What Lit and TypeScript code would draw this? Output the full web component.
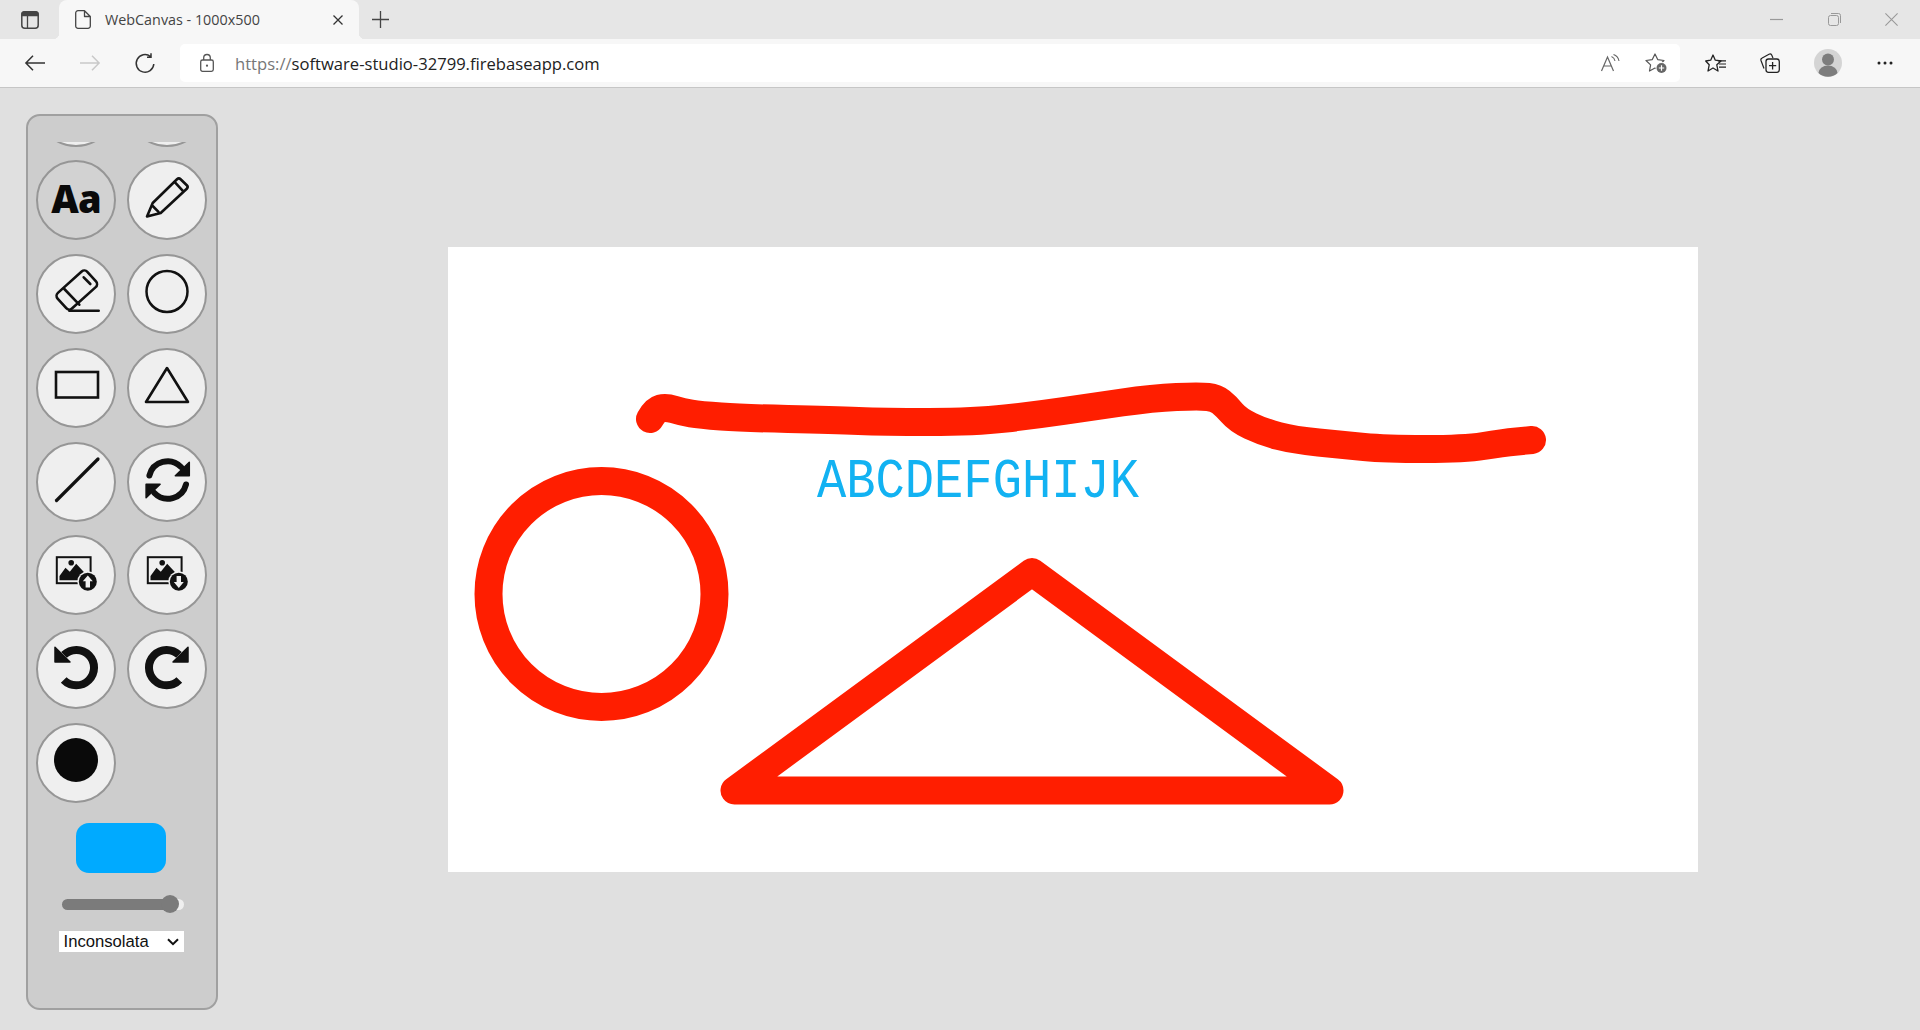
import { LitElement, css, html, svg } from "lit";
import { customElement } from "lit/decorators.js";

// Sidebar icons, all on a 48 box centred in their button.
const pencil = svg`<path d="M4 40.5 9.7 27 34 3.2a2.6 2.6 0 0 1 3.6 0l6.2 6a2.6 2.6 0 0 1 0 3.6L17.7 37ZM32 6.3l8.3 9M8.7 29l7.3 7.3" fill="none" stroke="#111" stroke-width="2.6" stroke-linejoin="round"/>`;
const eraser = svg`<g fill="none" stroke="#111" stroke-width="2.6" stroke-linecap="round"><rect x="-20" y="-10.5" width="40" height="21" rx="4" transform="translate(24.8 20) rotate(-42)"/><path d="M12.3 19 27.3 34.7M31.7 7.3 38.3 14M17.3 40.7H46.7"/></g>`;
const ring = svg`<circle cx="24" cy="21.500" r="20.500" fill="none" stroke="#111" stroke-width="2.500"/>`;
const rectangle = svg`<rect x="4" y="8" width="42" height="25.500" fill="none" stroke="#111" stroke-width="2.600"/>`;
const triangle = svg`<path d="M24 4 45 38H3Z" fill="none" stroke="#111" stroke-width="2.600" stroke-linejoin="round"/>`;
const line = svg`<path d="M4.500 42.500 46 1" stroke="#111" stroke-width="3.200" stroke-linecap="round"/>`;

const syncHalf = svg`<path d="M6.400 17.500A18.700 18.700 0 0 1 38 9" fill="none" stroke="#111" stroke-width="6" stroke-linecap="round"/><path d="M46.300 4.300V17.700H32.300Z" fill="#111" stroke="#111" stroke-width="1.500" stroke-linejoin="round"/>`;
const sync = svg`${syncHalf}<g transform="rotate(180 24.700 22)">${syncHalf}</g>`;

const undo = svg`<path d="M12 9.900A17.700 17.700 0 1 1 11.700 35" fill="none" stroke="#111" stroke-width="8"/><path d="M3 2.300V17H18Z" fill="#111" stroke="#111" stroke-width="1.500" stroke-linejoin="round"/>`;
const redo = svg`<g transform="translate(48 0) scale(-1 1)">${undo}</g>`;

const frame = svg`<rect x="4.800" y="6.200" width="33.800" height="26" fill="none" stroke="#111" stroke-width="2"/><circle cx="19.200" cy="11.700" r="2.800" fill="#111"/><path d="M7.500 29.300V25l6-8.300 4.300 4 6.400-8L33.500 22.700V29.300Z" fill="#111"/>`;
const badge = svg`<circle cx="35.800" cy="30.700" r="10.500" fill="#efefef"/><circle cx="35.800" cy="30.700" r="9" fill="#111"/>`;
const imageUp = svg`${frame}${badge}<path d="M35.800 24.500 40.800 30.300H38V36.500H33.600V30.300H30.800Z" fill="#efefef"/>`;
const imageDown = svg`${frame}${badge}<path d="M35.800 36.900 40.800 31.100H38V24.900H33.600V31.100H30.800Z" fill="#efefef"/>`;

const glyph = (d: unknown) => html`<svg class="glyph" viewBox="0 0 48 48">${d}</svg>`;

// Freehand stroke on the sheet, in the sheet's own pixels.
const scribble = [
  [202, 172], [207, 163], [218, 160], [234, 165], [252, 168], [294, 171], [386, 173],
  [435, 175], [527, 175], [588, 168], [643, 160], [705, 151], [752, 149], [768, 151],
  [778, 159], [790, 173], [815, 185], [846, 193], [895, 198], [937, 202], [1017, 202],
  [1054, 196], [1084, 193],
];

// Smooths the points with quadratic segments through their midpoints.
const smoothPath = (points: number[][]) => {
  let d = `M${points[0][0]} ${points[0][1]}`;
  for (let i = 1; i < points.length - 1; i++) {
    const [x, y] = points[i];
    const [nx, ny] = points[i + 1];
    d += `Q${x} ${y} ${(x + nx) / 2} ${(y + ny) / 2}`;
  }
  const last = points[points.length - 1];
  return `${d}L${last[0]} ${last[1]}`;
};

@customElement("app-root")
export class AppRoot extends LitElement {
  static styles = css`
    :host {
      display: flex;
      flex-direction: column;
      height: 1030px;
      background: #e0e0e0;
      font-family: "Open Sans", "Liberation Sans", sans-serif;
      overflow: hidden;
    }
    svg {
      display: block;
      overflow: visible;
    }
    .tabs {
      display: flex;
      align-items: center;
      height: 39px;
      flex: none;
      padding-left: 21px;
      background: #e6e6e6;
    }
    .tab {
      position: relative;
      display: flex;
      align-items: center;
      align-self: stretch;
      width: 300px;
      margin-left: 20px;
      padding: 0 16px;
      box-sizing: border-box;
      background: #f7f7f7;
      border-radius: 8px 8px 0 0;
    }
    .tab::before,
    .tab::after {
      content: "";
      position: absolute;
      bottom: 0;
      width: 6px;
      height: 6px;
    }
    .tab::before {
      left: -6px;
      background: radial-gradient(circle at 0 0, transparent 6px, #f7f7f7 6.5px);
    }
    .tab::after {
      right: -6px;
      background: radial-gradient(circle at 100% 0, transparent 6px, #f7f7f7 6.5px);
    }
    .title {
      margin-left: 14px;
      font-size: 14.35px;
      color: #444;
      white-space: nowrap;
    }
    .tab-close {
      margin-left: auto;
    }
    .new-tab {
      margin-left: 13px;
    }
    .window {
      display: flex;
      gap: 44.500px;
      margin-left: auto;
      padding-right: 22px;
    }
    .toolbar {
      display: flex;
      align-items: center;
      height: 49px;
      flex: none;
      padding-left: 7px;
      box-sizing: border-box;
      background: #f7f7f7;
      border-bottom: 1px solid #c6c6c6;
    }
    .slot {
      display: flex;
      justify-content: center;
      align-items: center;
      width: 55px;
      flex: none;
    }
    .slot.fav,
    .slot.more {
      width: 54px;
    }
    .slot.collect {
      width: 56px;
    }
    .slot.profile {
      width: 60px;
    }
    .address {
      display: flex;
      align-items: center;
      width: 1500px;
      height: 38px;
      flex: none;
      margin-left: 8px;
      margin-right: 8px;
      padding: 0 13px 0 20px;
      box-sizing: border-box;
      background: #fff;
      border-radius: 5px;
    }
    .url {
      margin-left: 21px;
      font-size: 16.600px;
      color: #222;
      white-space: nowrap;
    }
    .url span {
      color: #777;
    }
    .address-actions {
      display: flex;
      align-items: center;
      gap: 25px;
      margin-left: auto;
    }
    .page {
      display: flex;
      align-items: flex-start;
      flex: 1;
    }
    .panel {
      display: flex;
      flex-direction: column;
      align-items: center;
      width: 192px;
      height: 896px;
      flex: none;
      margin: 26px 0 0 25.500px;
      padding-top: 26px;
      box-sizing: border-box;
      background: #cdcdcd;
      border: 2px solid #a0a0a0;
      border-radius: 14px;
    }
    .scroller {
      align-self: flex-start;
      width: 180px;
      height: 663px;
      overflow: hidden;
    }
    .tools {
      display: grid;
      grid-template-columns: 80px 80px;
      gap: 13.750px 11.250px;
      margin: -75.300px 0 0 8.500px;
    }
    .tool {
      display: flex;
      align-items: center;
      justify-content: center;
      width: 80px;
      height: 80px;
      padding: 0;
      box-sizing: border-box;
      background: #efefef;
      border: 2px solid #969696;
      border-radius: 50%;
    }
    .tool.active {
      background: #d2d2d2;
    }
    .glyph {
      width: 48px;
      height: 48px;
    }
    .aa {
      margin-bottom: 5px;
      font-family: "Open Sans", "Liberation Sans", sans-serif;
      font-weight: 800;
      font-size: 38px;
      letter-spacing: -1px;
      line-height: 1;
      color: #0a0a0a;
    }
    .dot {
      width: 44px;
      height: 44px;
      margin-bottom: 5px;
      border-radius: 50%;
      background: #0a0a0a;
    }
    .swatch {
      width: 90px;
      height: 50px;
      flex: none;
      margin: 18px 1px 0 0;
      background: #00aaff;
      border-radius: 13px;
    }
    .size {
      appearance: none;
      -webkit-appearance: none;
      display: block;
      width: 122px;
      height: 18px;
      flex: none;
      margin: 22px 0 0 3px;
      background: transparent;
    }
    .size::-webkit-slider-runnable-track {
      height: 11px;
      border-radius: 5.500px;
      background: linear-gradient(to right, #7b7b7b 88%, #efefef 88%);
    }
    .size::-webkit-slider-thumb {
      -webkit-appearance: none;
      width: 18px;
      height: 18px;
      margin-top: -3.500px;
      border-radius: 50%;
      background: #7b7b7b;
    }
    .font {
      appearance: none;
      -webkit-appearance: none;
      width: 125px;
      height: 21px;
      flex: none;
      margin: 18px 0 0 -1px;
      padding: 0 0 0 5px;
      background: #fff
        url("data:image/svg+xml,%3Csvg xmlns='http://www.w3.org/2000/svg' width='12' height='8'%3E%3Cpath d='M1 1.200 6 6.200 11 1.200' fill='none' stroke='%23111' stroke-width='2'/%3E%3C/svg%3E")
        no-repeat right 5px center;
      border: none;
      border-radius: 0;
      font-family: "Liberation Sans", Arial, sans-serif;
      font-size: 16.670px;
      color: #111;
    }
    .sheet {
      width: 1250px;
      height: 625px;
      flex: none;
      margin: 159px 0 0 230.500px;
      background: #fff;
    }
    .sheet text {
      font-family: "Liberation Mono", monospace;
      font-size: 55px;
      fill: #12b2f2;
    }
  `;

  private tool(content: unknown, active = false) {
    return html`<button class="tool ${active ? "active" : ""}">${content}</button>`;
  }

  private renderTabs() {
    return html`
      <div class="tabs">
        <svg width="18" height="18" viewBox="0 0 18 18">
          <rect x=".8" y=".8" width="16.4" height="16.4" rx="3" fill="none" stroke="#444" stroke-width="1.5"></rect>
          <path d="M1 4.5V3a2 2 0 0 1 2-2h12a2 2 0 0 1 2 2v1.5ZM6.5 4.5V17" fill="#444" stroke="#444" stroke-width="1.3"></path>
        </svg>
        <div class="tab">
          <svg width="16" height="19" viewBox="0 0 16 19">
            <path d="M3 .7H9.5L15.3 6.5V16a2.3 2.3 0 0 1-2.3 2.3H3A2.3 2.3 0 0 1 .7 16V3A2.3 2.3 0 0 1 3 .7ZM9.5 .7V6.5H15.3" fill="none" stroke="#444" stroke-width="1.3" stroke-linejoin="round"></path>
          </svg>
          <span class="title">WebCanvas - 1000x500</span>
          <svg class="tab-close" width="10" height="10" viewBox="0 0 10 10">
            <path d="M.5 .5 9.5 9.5M9.5 .5 .5 9.5" stroke="#333" stroke-width="1.3"></path>
          </svg>
        </div>
        <svg class="new-tab" width="17" height="17" viewBox="0 0 17 17">
          <path d="M8.5 0V17M0 8.5H17" stroke="#444" stroke-width="1.3"></path>
        </svg>
        <div class="window">
          <svg width="13" height="13" viewBox="0 0 13 13"><path d="M0 6.5H13" stroke="#999" stroke-width="1.2"></path></svg>
          <svg width="13" height="13" viewBox="0 0 13 13">
            <rect x=".5" y="2.5" width="10" height="10" rx="2" fill="none" stroke="#999"></rect>
            <path d="M3 .5H10.5A2 2 0 0 1 12.5 2.5V10" fill="none" stroke="#999"></path>
          </svg>
          <svg width="13" height="13" viewBox="0 0 13 13"><path d="M.4 .4 12.6 12.6M12.6 .4 .4 12.6" stroke="#999" stroke-width="1.1"></path></svg>
        </div>
      </div>
    `;
  }

  private renderToolbar() {
    return html`
      <div class="toolbar">
        <div class="slot">
          <svg width="20" height="16" viewBox="0 0 20 16"><path d="M20 8H1M8 .7 .9 8 8 15.3" fill="none" stroke="#333" stroke-width="1.5"></path></svg>
        </div>
        <div class="slot">
          <svg width="20" height="16" viewBox="0 0 20 16"><path d="M0 8H19M12 .7 19.1 8 12 15.3" fill="none" stroke="#c9c9c9" stroke-width="1.5"></path></svg>
        </div>
        <div class="slot">
          <svg width="20" height="20" viewBox="0 0 20 20">
            <path d="M15.5 3.5A8.8 8.8 0 1 0 18.8 11M16 .2V4.2H12" fill="none" stroke="#333" stroke-width="1.5"></path>
          </svg>
        </div>
        <div class="address">
          <svg width="14" height="18" viewBox="0 0 14 18">
            <rect x=".7" y="6" width="12.6" height="11.3" rx="1.8" fill="none" stroke="#555" stroke-width="1.3"></rect>
            <path d="M3.7 6V3.8a3.3 3.3 0 0 1 6.6 0V6" fill="none" stroke="#555" stroke-width="1.3"></path>
            <circle cx="7" cy="11.7" r="1.1" fill="#555"></circle>
          </svg>
          <div class="url"><span>https://</span>software-studio-32799.firebaseapp.com</div>
          <div class="address-actions">
            <svg width="19" height="18" viewBox="0 0 19 18">
              <path d="M.5 17 6.5 3 12.5 17M2.5 12H10.5" fill="none" stroke="#666" stroke-width="1.2"></path>
              <path d="M10.5 2.5A6 6 0 0 1 14 7M12.5 .5A8.5 8.5 0 0 1 18 7" fill="none" stroke="#666" stroke-width="1.1"></path>
            </svg>
            <svg width="22" height="20" viewBox="0 0 22 20">
              <path d="M10 1 12.700 6.600 19 7.500 14.400 11.900 15.500 18 10 15 4.500 18 5.600 11.900 1 7.500 7.300 6.600Z" fill="none" stroke="#555" stroke-width="1.2" stroke-linejoin="round"></path>
              <circle cx="16.500" cy="15" r="6" fill="#fff"></circle>
              <circle cx="16.500" cy="15" r="5" fill="#666"></circle>
              <path d="M16.500 12.300V17.700M13.800 15H19.200" stroke="#fff" stroke-width="1.2"></path>
            </svg>
          </div>
        </div>
        <div class="slot fav">
          <svg width="21" height="19" viewBox="0 0 21 19">
            <path d="M8 1 10.300 6.200 16 7 11.800 10.800 13 17 8 14 3 17 4.200 10.800 .7 7 5.700 6.200Z" fill="none" stroke="#222" stroke-width="1.3" stroke-linejoin="round"></path>
            <path d="M13 6.800H21M14 10H21M14 13.200H21" stroke="#222" stroke-width="1.200"></path>
          </svg>
        </div>
        <div class="slot collect">
          <svg width="20" height="20" viewBox="0 0 20 20">
            <path d="M4 15.5 1 7.5A2 2 0 0 1 2.2 5L9 1.2A2 2 0 0 1 11.7 2L13 5" fill="none" stroke="#222" stroke-width="1.2"></path>
            <rect x="6" y="6" width="13.3" height="13.3" rx="2.5" fill="#f7f7f7" stroke="#222" stroke-width="1.3"></rect>
            <path d="M12.6 9V16.4M9 12.7H16.2" stroke="#222" stroke-width="1.3"></path>
          </svg>
        </div>
        <div class="slot profile">
          <svg width="28" height="28" viewBox="0 0 28 28">
            <circle cx="14" cy="14" r="14" fill="#d4d4d4"></circle>
            <circle cx="14" cy="10.5" r="6" fill="#7d7d7d"></circle>
            <path d="M4.5 24a9.5 7.5 0 0 1 19 0 14 14 0 0 1-19 0Z" fill="#7d7d7d"></path>
          </svg>
        </div>
        <div class="slot more">
          <svg width="16" height="4" viewBox="0 0 16 4"><path d="M2 2h.01M8 2h.01M14 2h.01" stroke="#222" stroke-width="3" stroke-linecap="round"></path></svg>
        </div>
      </div>
    `;
  }

  private renderPanel() {
    return html`
      <aside class="panel">
        <div class="scroller">
          <div class="tools">
            ${this.tool("")}${this.tool("")}
            ${this.tool(html`<span class="aa">Aa</span>`, true)}${this.tool(glyph(pencil))}
            ${this.tool(glyph(eraser))}${this.tool(glyph(ring))}
            ${this.tool(glyph(rectangle))}${this.tool(glyph(triangle))}
            ${this.tool(glyph(line))}${this.tool(glyph(sync))}
            ${this.tool(glyph(imageUp))}${this.tool(glyph(imageDown))}
            ${this.tool(glyph(undo))}${this.tool(glyph(redo))}
            ${this.tool(html`<div class="dot"></div>`)}
          </div>
        </div>
        <div class="swatch"></div>
        <input class="size" type="range" min="0" max="100" value="95" />
        <select class="font">
          <option>Inconsolata</option>
        </select>
      </aside>
    `;
  }

  // Coordinates below are the sheet's own pixels (the sheet starts at 448,247 on the page).
  private renderSheet() {
    return html`
      <svg class="sheet" viewBox="0 0 1250 625">
        <g fill="none" stroke="#ff1e00" stroke-width="28" stroke-linecap="round" stroke-linejoin="round">
          <path d=${smoothPath(scribble)}></path>
          <circle cx="153.500" cy="347" r="113"></circle>
          <path d="M584 325 286.500 543.500H881.500Z"></path>
        </g>
        <text x="369" y="249.500" textLength="322" lengthAdjust="spacingAndGlyphs">ABCDEFGHIJK</text>
      </svg>
    `;
  }

  render() {
    return html`
      ${this.renderTabs()} ${this.renderToolbar()}
      <main class="page">${this.renderPanel()} ${this.renderSheet()}</main>
    `;
  }
}
